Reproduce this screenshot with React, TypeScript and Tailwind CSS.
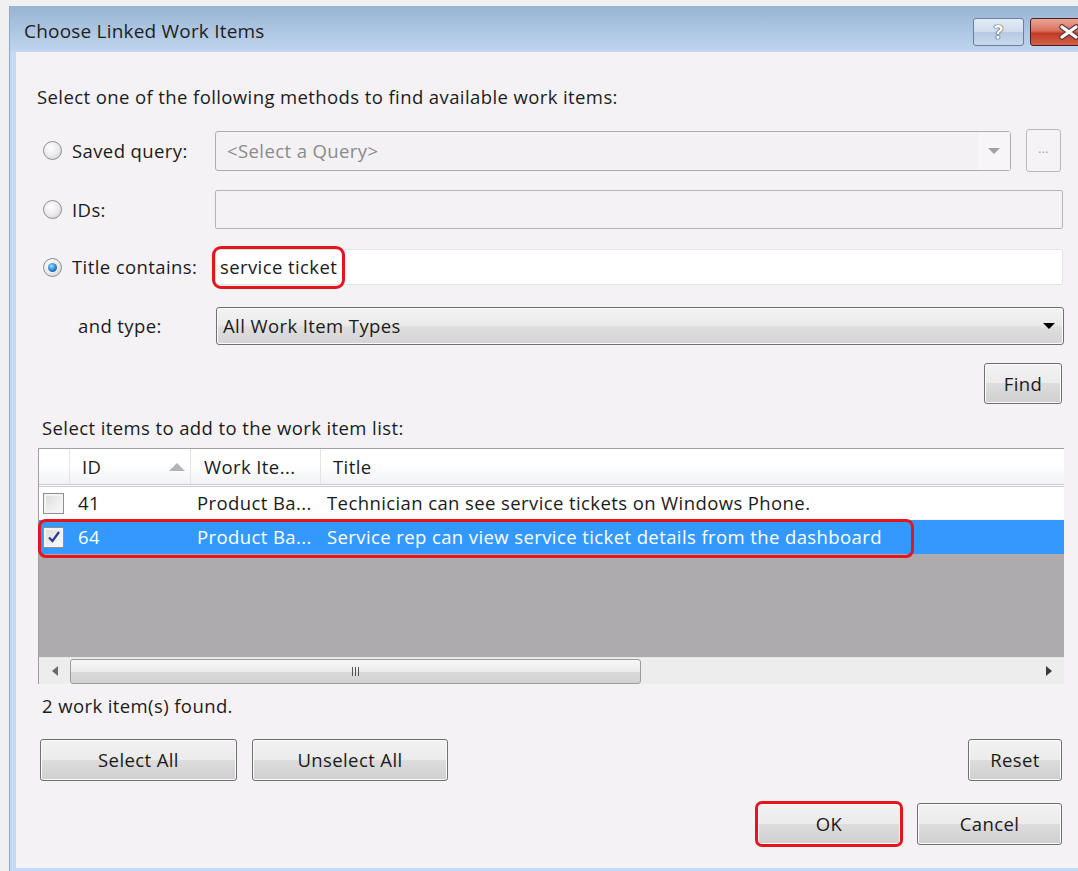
import React from "react";

/* ---------- small Win7-style controls ---------- */

function Radio({ checked }: { checked?: boolean }) {
  return (
    <span className="flex h-[19px] w-[19px] shrink-0 items-center justify-center rounded-full border border-[#8e8f8f] bg-[radial-gradient(circle_at_40%_35%,#ffffff_0%,#e9e9e9_55%,#c9c9c9_100%)]">
      {checked && (
        <span className="h-[9px] w-[9px] rounded-full bg-[radial-gradient(circle_at_40%_35%,#9ee0ff_0%,#2a8ad6_50%,#0d3f73_100%)]" />
      )}
    </span>
  );
}

function CheckBox({ checked }: { checked?: boolean }) {
  return (
    <span className="flex h-[21px] w-[21px] items-center justify-center border border-[#8f8f8f] bg-[linear-gradient(135deg,#dcdcdc,#fbfbfb)] shadow-[inset_0_0_0_2px_#f4f4f4]">
      {checked && (
        <svg width="14" height="14" viewBox="0 0 14 14">
          <path d="M2 7.5 L5.5 11 L12 2" fill="none" stroke="#2c3b8a" strokeWidth="2.2" />
        </svg>
      )}
    </span>
  );
}

function WinButton({ label, className }: { label: string; className: string }) {
  return (
    <button
      className={
        "flex items-center justify-center rounded-[3px] border border-[#707070] bg-[linear-gradient(#f2f2f2_0%,#ebebeb_50%,#dddddd_50%,#cfcfcf_100%)] text-[18.5px] tracking-[0.4px] text-[#1a1a1a] shadow-[inset_0_0_0_1px_#fbfbfb] " +
        className
      }
    >
      {label}
    </button>
  );
}

function Triangle({ dir, className }: { dir: "up" | "down" | "left" | "right"; className: string }) {
  const pts = {
    up: "0,8 8,0 16,8",
    down: "0,0 12,0 6,6",
    left: "6,0 6,10 0,5",
    right: "0,0 0,10 6,5",
  }[dir];
  const size = { up: [16, 8], down: [12, 6], left: [6, 10], right: [6, 10] }[dir];
  return (
    <svg width={size[0]} height={size[1]} viewBox={`0 0 ${size[0]} ${size[1]}`} className={className}>
      <polygon points={pts} fill="currentColor" />
    </svg>
  );
}

/* ---------- result grid ---------- */

const rows = [
  { id: "41", type: "Product Ba...", title: "Technician can see service tickets on Windows Phone.", checked: false },
  { id: "64", type: "Product Ba...", title: "Service rep can view service ticket details from the dashboard", checked: true },
];

function ResultGrid() {
  return (
    <div className="relative ml-[22px] mr-[14px] mt-[8px] flex h-[236px] flex-col border-l border-t border-[#a0a0a0]">
      {/* header */}
      <div className="flex h-[38px] border-b-[3px] border-double border-[#c9c9c9] bg-[linear-gradient(#ffffff_45%,#f1f2f5_100%)]">
        <div className="w-[31px] border-r border-[#e3e3e3]" />
        <div className="flex w-[121px] items-center justify-between border-r border-[#e3e3e3] pl-[12px] pr-[5px]">
          <span>ID</span>
          <Triangle dir="up" className="text-[#b4b4b4]" />
        </div>
        <div className="flex w-[130px] items-center border-r border-[#e3e3e3] pl-[13px]">Work Ite...</div>
        <div className="flex flex-1 items-center pl-[12px]">Title</div>
      </div>

      {/* rows */}
      {rows.map((r) => (
        <div
          key={r.id}
          className={
            r.checked
              ? "mt-px flex h-[34px] items-center bg-[#3399ff] text-white"
              : "flex h-[32px] items-center bg-white text-[#1b1b1b]"
          }
        >
          <div className="flex w-[31px] items-center pl-[4px]">
            <CheckBox checked={r.checked} />
          </div>
          <div className="w-[121px] pl-[8px]">{r.id}</div>
          <div className="w-[130px] pl-[6px]">{r.type}</div>
          <div className="flex-1 whitespace-nowrap pl-[6px]">{r.title}</div>
        </div>
      ))}

      {/* empty area */}
      <div className="flex-1 bg-[#adabae]" />

      {/* horizontal scrollbar */}
      <div className="flex h-[27px] items-center border-t border-[#e6e6e6] bg-[#eeedee]">
        <div className="flex w-[31px] justify-center">
          <Triangle dir="left" className="text-[#6a6a6a]" />
        </div>
        <div className="flex h-[25px] w-[571px] items-center justify-center rounded-[3px] border border-[#9c9c9c] bg-[linear-gradient(#f7f7f7_0%,#ececec_50%,#dadada_51%,#d2d2d2_100%)]">
          <div className="flex gap-[2px]">
            <span className="h-[9px] w-px bg-[#555]" />
            <span className="h-[9px] w-px bg-[#555]" />
            <span className="h-[9px] w-px bg-[#555]" />
          </div>
        </div>
        <div className="flex-1" />
        <div className="flex w-[30px] justify-center">
          <Triangle dir="right" className="text-[#3a3a3a]" />
        </div>
      </div>

      {/* highlight ring around the checked row */}
      <div className="pointer-events-none absolute left-[-1px] top-[70px] h-[39px] w-[876px] rounded-[8px] border-[3px] border-[#e5141d]" />
    </div>
  );
}

/* ---------- dialog ---------- */

export default function App() {
  return (
    <div className="flex h-[871px] w-[1078px] flex-col overflow-hidden bg-[#f0f0f0] pl-[9px] pt-[6px] font-['Open_Sans',sans-serif] text-[#1b1b1b]">
      <div className="flex flex-1 flex-col border-l border-[#8fa8c6] bg-[linear-gradient(180deg,#98b4d5_0px,#bed4ed_44px,#c5daf2_46px,#c5daf2_100%)]">
        {/* title bar */}
        <div className="flex h-[46px] items-start">
          <span className="ml-[14px] mt-[13px] text-[19px] leading-[24px] tracking-[0.2px] text-[#1e1e1e]">Choose Linked Work Items</span>
          <div className="-mr-[30px] ml-auto mt-[12px] flex gap-[6px]">
            <div className="flex h-[28px] w-[51px] items-center justify-center rounded-[3px] border border-[#6c7f99] bg-[linear-gradient(#e3ecf7_0%,#cfdcec_50%,#b6c9e1_51%,#c9d9ec_100%)] text-[19px] font-bold leading-none text-white [text-shadow:0_0_1px_#3d3d3d,0_0_1px_#3d3d3d,0_0_1px_#3d3d3d]">
              ?
            </div>
            <div className="flex h-[28px] w-[78px] items-center justify-center rounded-[3px] border border-[#4e1e1e] bg-[linear-gradient(#eba597_0%,#d9705e_45%,#c23c27_55%,#d0614a_100%)]">
              <svg width="22" height="16" viewBox="0 0 22 16">
                <path d="M4 3 L18 13 M18 3 L4 13" stroke="#5a3a3a" strokeWidth="5.5" strokeLinecap="round" />
                <path d="M4 3 L18 13 M18 3 L4 13" stroke="#ffffff" strokeWidth="3.2" strokeLinecap="round" />
              </svg>
            </div>
          </div>
        </div>

        {/* client area */}
        <div className="mb-[3px] ml-[6px] flex flex-1 flex-col bg-[#f5f2f6] text-[18.5px] tracking-[0.4px]">
          <div className="ml-[21px] mt-[33px] leading-[24px]">Select one of the following methods to find available work items:</div>

          {/* saved query */}
          <div className="mt-[20px] flex h-[43px] items-center">
            <div className="ml-[27px]">
              <Radio />
            </div>
            <span className="ml-[10px] w-[143px]">Saved query:</span>
            <div className="flex h-[40px] w-[796px] items-center rounded-[3px] border border-[#adadad] bg-[#f4f1f5]">
              <span className="flex-1 pl-[11px] text-[#8a8a8a]">&lt;Select a Query&gt;</span>
              <div className="flex h-full w-[32px] items-center justify-center bg-[#f7f5f8]">
                <Triangle dir="down" className="text-[#a0a0a0]" />
              </div>
            </div>
            <div className="ml-[15px] flex h-[43px] w-[35px] items-center justify-center rounded-[3px] border border-[#b9b9b9] bg-[#f5f3f6] pb-[4px] text-[12px] text-[#9a9a9a]">
              ...
            </div>
          </div>

          {/* ids */}
          <div className="mt-[18px] flex h-[39px] items-center">
            <div className="ml-[27px]">
              <Radio />
            </div>
            <span className="ml-[10px] w-[143px]">IDs:</span>
            <div className="h-[39px] w-[848px] rounded-[2px] border border-[#b4b4b4] bg-[#f5f2f6]" />
          </div>

          {/* title contains */}
          <div className="mt-[20px] flex h-[36px] items-center">
            <div className="ml-[27px]">
              <Radio checked />
            </div>
            <span className="ml-[10px] w-[143px]">Title contains:</span>
            <div className="relative flex h-[36px] w-[848px] items-center rounded-[2px] border border-[#e3e3e3] bg-white pl-[4px]">
              service ticket
              <div className="pointer-events-none absolute left-[-4px] top-[-4px] h-[43px] w-[133px] rounded-[9px] border-[3px] border-[#e5141d]" />
            </div>
          </div>

          {/* type */}
          <div className="mt-[22px] flex h-[38px] items-center">
            <span className="ml-[62px] w-[138px]">and type:</span>
            <div className="flex h-[38px] w-[848px] items-center rounded-[3px] border border-[#707070] bg-[linear-gradient(#f3f3f3_0%,#ebebeb_45%,#dedede_55%,#d4d4d4_100%)] shadow-[inset_0_0_0_1px_#fafafa]">
              <span className="flex-1 pl-[6px]">All Work Item Types</span>
              <Triangle dir="down" className="mr-[8px] text-black" />
            </div>
          </div>

          <div className="mr-[16px] mt-[18px] flex justify-end">
            <WinButton label="Find" className="h-[41px] w-[78px]" />
          </div>

          <div className="ml-[26px] mt-[12px] leading-[24px]">Select items to add to the work item list:</div>

          <ResultGrid />

          <div className="ml-[26px] mt-[10px] leading-[24px]">2 work item(s) found.</div>

          <div className="mr-[16px] mt-[21px] flex">
            <WinButton label="Select All" className="ml-[24px] h-[42px] w-[197px]" />
            <WinButton label="Unselect All" className="ml-[15px] h-[42px] w-[196px]" />
            <WinButton label="Reset" className="ml-auto h-[42px] w-[94px]" />
          </div>

          <div className="mr-[16px] mt-[22px] flex justify-end">
            <div className="relative">
              <WinButton label="OK" className="h-[42px] w-[144px]" />
              <div className="pointer-events-none absolute left-[-2px] top-[-2px] h-[46px] w-[148px] rounded-[7px] border-[3px] border-[#e5141d]" />
            </div>
            <WinButton label="Cancel" className="ml-[16px] h-[42px] w-[145px]" />
          </div>
        </div>
      </div>
    </div>
  );
}
